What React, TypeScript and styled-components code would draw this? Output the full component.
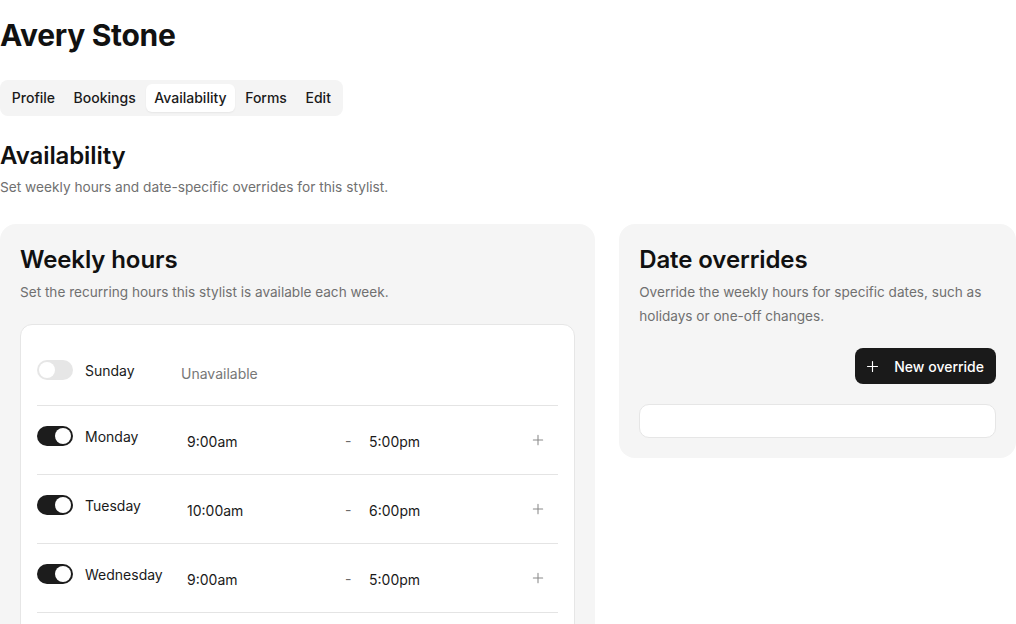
import * as React from "react";
import styled, { createGlobalStyle } from "styled-components";

const GlobalStyle = createGlobalStyle`
  html, body {
    margin: 0;
    padding: 0;
    overflow: hidden;
    background: #ffffff;
  }
  body {
    font-family: Inter, "Noto Sans", sans-serif;
    color: #111111;
  }
`;

interface Day {
  name: string;
  on: boolean;
  start?: string;
  end?: string;
}

const days: Day[] = [
  { name: "Sunday", on: false },
  { name: "Monday", on: true, start: "9:00am", end: "5:00pm" },
  { name: "Tuesday", on: true, start: "10:00am", end: "6:00pm" },
  { name: "Wednesday", on: true, start: "9:00am", end: "5:00pm" },
];

const tabs = ["Profile", "Bookings", "Availability", "Forms", "Edit"];

const PlusIcon = ({ size = 14 }: { size?: number }) => (
  <svg width={size} height={size} viewBox="0 0 24 24" fill="none" stroke="currentColor" strokeWidth={1.8} strokeLinecap="round">
    <path d="M12 4v16M4 12h16" />
  </svg>
);

const App: React.FunctionComponent = () => {
  return <Page>
      <GlobalStyle />
      <Name>Avery Stone</Name>
      <TabBar>
        {tabs.map((t) => <Tab key={t} active={t === "Availability"}>{t}</Tab>)}
      </TabBar>
      <SectionTitle>Availability</SectionTitle>
      <SectionText>Set weekly hours and date-specific overrides for this stylist.</SectionText>
      <Columns>
        <Card>
          <CardTitle>Weekly hours</CardTitle>
          <CardText>Set the recurring hours this stylist is available each week.</CardText>
          <Inner>
            {days.map((d) => <DayRow key={d.name}>
                <Toggle on={d.on}><Knob on={d.on} /></Toggle>
                <DayName on={d.on}>{d.name}</DayName>
                {d.on ? <>
                    <Time>{d.start}</Time>
                    <Dash>-</Dash>
                    <Time>{d.end}</Time>
                    <AddBtn><PlusIcon /></AddBtn>
                  </> : <Unavailable>Unavailable</Unavailable>}
              </DayRow>)}
          </Inner>
        </Card>
        <Card>
          <CardTitle>Date overrides</CardTitle>
          <CardText>Override the weekly hours for specific dates, such as holidays or one-off changes.</CardText>
          <ButtonBar>
            <DarkButton><PlusIcon size={15} /> New override</DarkButton>
          </ButtonBar>
          <EmptyBox />
        </Card>
      </Columns>
    </Page>;
};

const Page = styled.div`
  padding: 16px 0 0 0;
`;

const Name = styled.h1`
  margin: 0;
  font-size: 30px;
  line-height: 38px;
  font-weight: 700;
  letter-spacing: -0.3px;
`;

const TabBar = styled.div`
  display: inline-flex;
  gap: 1px;
  margin-top: 26px;
  padding: 4px 3px;
  background: #f4f4f4;
  border-radius: 8px;
`;

const Tab = styled.div<{ active: boolean }>`
  padding: 0 8.8px;
  height: 28px;
  line-height: 28px;
  font-size: 14px;
  font-weight: 500;
  border-radius: 6px;
  color: #1a1a1a;
  background: ${(p) => (p.active ? "#ffffff" : "transparent")};
  box-shadow: ${(p) => (p.active ? "0 1px 2px rgba(0,0,0,0.06)" : "none")};
`;

const SectionTitle = styled.h2`
  margin: 24px 0 0 0;
  font-size: 24px;
  line-height: 32px;
  font-weight: 600;
  letter-spacing: -0.1px;
`;

const SectionText = styled.p`
  margin: 4px 0 0 0;
  font-size: 13.7px;
  line-height: 22px;
  color: #707070;
`;

const Columns = styled.div`
  display: grid;
  grid-template-columns: 3fr 2fr;
  gap: 24px;
  margin-top: 26px;
  align-items: start;
`;

const Card = styled.div`
  background: #f5f5f5;
  border-radius: 16px;
  padding: 20px;
`;

const CardTitle = styled.h3`
  margin: 0;
  font-size: 24px;
  line-height: 32px;
  font-weight: 600;
  letter-spacing: -0.1px;
`;

const CardText = styled.p`
  margin: 4px 0 0 0;
  font-size: 13.6px;
  line-height: 24px;
  color: #707070;
`;

const Inner = styled.div`
  margin-top: 20px;
  background: #ffffff;
  border: 1px solid #e6e6e6;
  border-radius: 12px;
  padding: 12px 16px 24px 16px;
`;

const DayRow = styled.div`
  display: flex;
  align-items: center;
  height: 68px;
  border-bottom: 1px solid #e4e4e4;
`;

const Toggle = styled.div<{ on: boolean }>`
  width: 36px;
  height: 20px;
  border-radius: 10px;
  background: ${(p) => (p.on ? "#1c1c1c" : "#e6e6e6")};
  position: relative;
  flex-shrink: 0;
  margin-bottom: ${(p) => (p.on ? "8px" : "2px")};
`;

const Knob = styled.div<{ on: boolean }>`
  position: absolute;
  top: 2px;
  left: ${(p) => (p.on ? "18px" : "2px")};
  width: 16px;
  height: 16px;
  border-radius: 50%;
  background: #ffffff;
`;

const DayName = styled.div<{ on: boolean }>`
  width: 96px;
  margin-left: 12px;
  font-size: 14px;
  color: #1a1a1a;
  margin-bottom: ${(p) => (p.on ? "8px" : "2px")};
`;

const Time = styled.div`
  width: 154px;
  padding-left: 6px;
  font-size: 14px;
  color: #1a1a1a;
  margin-top: 2px;
`;

const Dash = styled.div`
  width: 18px;
  padding-left: 4px;
  font-size: 14px;
  color: #6b6b6b;
`;

const Unavailable = styled.div`
  font-size: 14px;
  color: #777777;
  margin-top: 4px;
`;

const AddBtn = styled.div`
  margin-left: auto;
  margin-right: 13px;
  color: #8a8a8a;
  display: flex;
`;

const ButtonBar = styled.div`
  display: flex;
  justify-content: flex-end;
  margin-top: 20px;
`;

const DarkButton = styled.button`
  display: flex;
  align-items: center;
  gap: 14px;
  height: 36px;
  padding: 0 12px 0 10px;
  border: none;
  border-radius: 8px;
  background: #1a1a1a;
  color: #ffffff;
  font-family: Inter, "Noto Sans", sans-serif;
  font-size: 14px;
  font-weight: 500;
`;

const EmptyBox = styled.div`
  margin-top: 20px;
  height: 32px;
  background: #ffffff;
  border: 1px solid #e6e6e6;
  border-radius: 10px;
`;

export default App;
